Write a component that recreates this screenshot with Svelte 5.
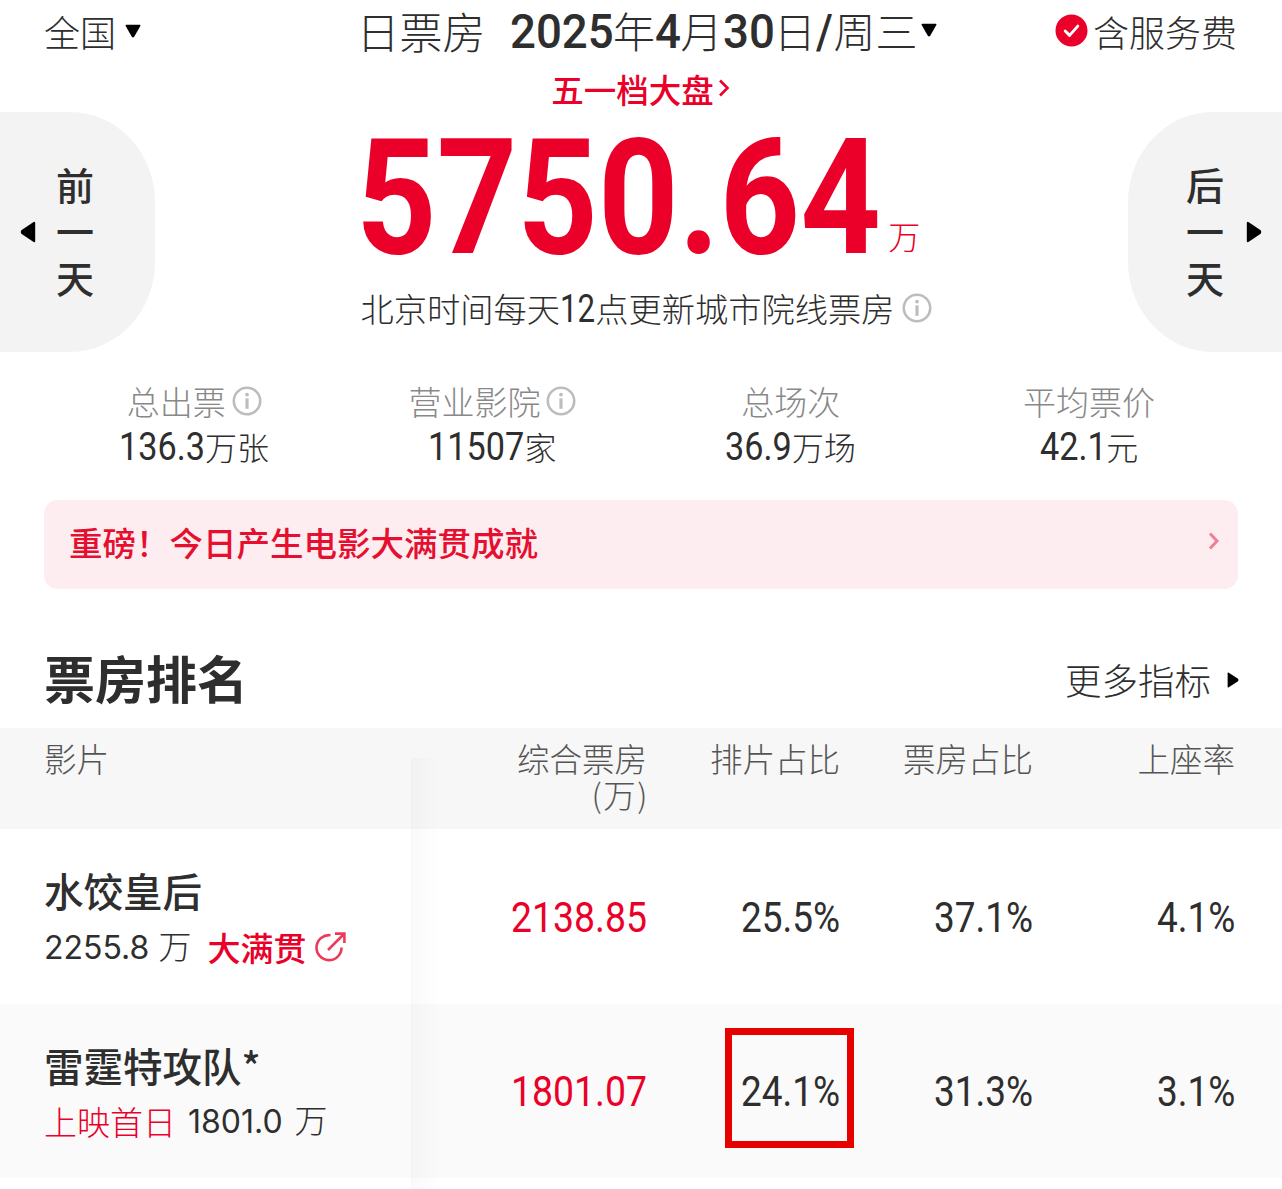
<script lang="ts">
  const stats = [
    { label: "总出票", num: "136.3", unit: "万张", info: true },
    { label: "营业影院", num: "11507", unit: "家", info: true },
    { label: "总场次", num: "36.9", unit: "万场", info: false },
    { label: "平均票价", num: "42.1", unit: "元", info: false }
  ];
  const heads = ["综合票房", "排片占比", "票房占比", "上座率"];

  // Roboto advance widths in em, there is no condensed face installed
  function emWidth(text: string): number {
    let w = 0;
    for (const c of text) {
      if (c === ".") w += 0.263;
      else if (c === "%") w += 0.732;
      else if (c === "/") w += 0.412;
      else w += 0.5615;
    }
    return w;
  }
</script>

{#snippet n(text: string, size: number, sx: number)}
  <span class="cond" style="font-size: {size}px; width: {emWidth(text) * size * sx}px; transform: scaleX({sx})">{text}</span>
{/snippet}

{#snippet info(size: number)}
  <svg class="info" width={size} height={size} viewBox="0 0 30 30" fill="none">
    <circle cx="15" cy="15" r="13.2" stroke="#bdbdbd" stroke-width="2.6" />
    <circle cx="15" cy="8.6" r="1.9" fill="#bdbdbd" />
    <rect x="13.4" y="12.4" width="3.2" height="10.4" fill="#bdbdbd" />
  </svg>
{/snippet}

{#snippet tri(dir: string, w: number, h: number)}
  <svg class="tri" width={w} height={h} viewBox="0 0 12 12" preserveAspectRatio="none" style="transform: rotate({dir}deg)">
    <path d="M1.2 .6 L10.8 .6 Q12 .6 11.5 1.8 L6.9 11 Q6 12 5.1 11 L.5 1.8 Q0 .6 1.2 .6 Z" fill="#000" />
  </svg>
{/snippet}

<div class="page">
  <header class="top">
    <div class="region"><span>全国</span>{@render tri("0", 16, 14)}</div>
    <div class="date">
      <span class="date-title">日票房</span>
      <span class="date-val">{@render n("2025", 48, 0.95)}年{@render n("4", 48, 0.95)}月{@render n("30", 48, 0.95)}日{@render n("/", 48, 0.9)}周三</span>
      {@render tri("0", 16, 14)}
    </div>
    <div class="fee">
      <svg width="33" height="33" viewBox="0 0 34 34">
        <circle cx="17" cy="17" r="16.5" fill="#ea0029" />
        <path d="M10.5 17.5 L15 22 L23.5 12.5" fill="none" stroke="#fff" stroke-width="3" stroke-linecap="round" stroke-linejoin="round" />
      </svg>
      <span>含服务费</span>
    </div>
  </header>

  <section class="hero">
    <button class="day prev">
      <span class="arrow">{@render tri("90", 22, 16)}</span>
      <span class="day-text">前<br />一<br />天</span>
    </button>
    <div class="hero-mid">
      <div class="holiday">
        五一档大盘
        <svg width="12" height="22" viewBox="0 0 12 22" fill="none">
          <path d="M2 3.5 L9.5 11 L2 18.5" stroke="#ea0029" stroke-width="2.6" />
        </svg>
      </div>
      <div class="total"><span class="total-num">{@render n("5750.64", 162, 0.868)}</span><span class="total-unit">万</span></div>
      <div class="note"><span>北京时间每天{@render n("12", 39, 0.8)}点更新城市院线票房</span>{@render info(30)}</div>
    </div>
    <button class="day next">
      <span class="day-text">后<br />一<br />天</span>
      <span class="arrow">{@render tri("-90", 22, 16)}</span>
    </button>
  </section>

  <section class="stats">
    {#each stats as s}
      <div class="stat">
        <div class="stat-label">{s.label}{#if s.info}{@render info(30)}{/if}</div>
        <div class="stat-val">{@render n(s.num, 38, 0.9)}{s.unit}</div>
      </div>
    {/each}
  </section>

  <a class="banner" href="#top">
    <span>重磅！今日产生电影大满贯成就</span>
    <svg width="12" height="20" viewBox="0 0 12 20" fill="none">
      <path d="M2 2.5 L9 10 L2 17.5" stroke="#f07f95" stroke-width="3" />
    </svg>
  </a>

  <div class="rank-head">
    <h2>票房排名</h2>
    <div class="more"><span>更多指标</span>{@render tri("-90", 16, 12)}</div>
  </div>

  <div class="table">
    <div class="row thead">
      <div class="film-cell">影片</div>
      {#each heads as h, i}
        <div class="num-head">{h}{#if i === 0}<br /><span class="paren">(万)</span>{/if}</div>
      {/each}
    </div>

    <div class="row body">
      <div class="film-cell">
        <div class="film-name">水饺皇后</div>
        <div class="film-sub">
          <span class="sum">2255.8 <em>万</em></span>
          <span class="tag">大满贯</span>
          <svg width="32" height="32" viewBox="0 0 32 32" fill="none" stroke="#ea3c5a" stroke-width="2.6">
            <path d="M26.5 16.5 A12.5 12.5 0 1 1 15.5 4.2" />
            <path d="M13 19 L29 3 M20 2.6 H29.4 V12" />
          </svg>
        </div>
      </div>
      <div class="num red">{@render n("2138.85", 42, 0.89)}</div>
      <div class="num">{@render n("25.5%", 42, 0.88)}</div>
      <div class="num">{@render n("37.1%", 42, 0.88)}</div>
      <div class="num">{@render n("4.1%", 42, 0.88)}</div>
    </div>

    <div class="row body alt">
      <div class="film-cell">
        <div class="film-name">雷霆特攻队*</div>
        <div class="film-sub">
          <span class="first">上映首日</span>
          <span class="sum">1801.0 <em>万</em></span>
        </div>
      </div>
      <div class="num red">{@render n("1801.07", 42, 0.89)}</div>
      <div class="num marked">{@render n("24.1%", 42, 0.88)}<i class="mark"></i></div>
      <div class="num">{@render n("31.3%", 42, 0.88)}</div>
      <div class="num">{@render n("3.1%", 42, 0.88)}</div>
    </div>

    <div class="fade"></div>
  </div>
</div>

<style>
  :global(body) {
    margin: 0;
    background: #fff;
  }

  .page {
    width: 1282px;
    height: 1189px;
    overflow: hidden;
    color: #2e2e2e;
    font-family: "Noto Sans CJK SC", "Noto Sans", sans-serif;
    font-weight: 300;
  }

  .cond {
    display: inline-block;
    font-family: "Roboto", sans-serif;
    font-weight: 400;
    white-space: nowrap;
    transform-origin: left center;
    line-height: 1;
  }

  .top {
    height: 62px;
    padding: 0 45px 0 44px;
    display: grid;
    grid-template-columns: 1fr auto 1fr;
    align-items: center;
    font-size: 36px;
  }

  .region { display: flex; align-items: center; gap: 9px; margin-top: -1px; }

  .date {
    display: flex;
    align-items: center;
    gap: 3px;
    font-size: 42px;
    margin: -3px 0 0 12px;
  }
  .date-title { margin-right: 22px; font-size: 43px; }
  .date-val .cond { font-weight: 500; }

  .fee { display: flex; align-items: center; justify-content: flex-end; gap: 5px; margin-top: -1px; }

  .hero {
    display: grid;
    grid-template-columns: 155px 1fr 154px;
    height: 290px;
  }

  .day {
    margin-top: 50px;
    border: none;
    background: #f3f3f3;
    padding: 0;
    display: flex;
    align-items: center;
    color: #2e2e2e;
    font-family: inherit;
  }

  .prev {
    border-radius: 0 85px 85px 0 / 0 90px 90px 0;
    padding-left: 17px;
    gap: 17px;
  }

  .next {
    border-radius: 85px 0 0 85px / 90px 0 0 90px;
    padding-left: 58px;
    gap: 19px;
  }

  .arrow { display: flex; }

  .day-text {
    font-size: 38px;
    font-weight: 500;
    line-height: 46.5px;
    text-align: center;
    margin-top: -3px;
  }

  .hero-mid {
    display: flex;
    flex-direction: column;
    align-items: center;
  }

  .holiday {
    height: 52px;
    padding-bottom: 2px;
    display: flex;
    align-items: center;
    gap: 4px;
    margin-right: 2px;
    font-size: 32.5px;
    font-weight: 500;
    color: #ea0029;
  }

  .total {
    height: 168px;
    display: flex;
    align-items: flex-end;
    margin-right: 7px;
  }

  .total-num {
    height: 168px;
    line-height: 165px;
    color: #ea0029;
  }

  .total-num .cond { font-weight: 700; line-height: 165px; vertical-align: top; }

  .total-unit {
    font-size: 32px;
    line-height: 40px;
    color: #ea0029;
    margin: 0 0 29px 22px;
  }

  .note {
    margin: 2px 0 0 10px;
    display: flex;
    align-items: center;
    gap: 8px;
    font-size: 33.25px;
    line-height: 44px;
  }

  .stats {
    margin-top: 27px;
    padding: 0 44px 0 45px;
    display: grid;
    grid-template-columns: repeat(4, 1fr);
    text-align: center;
  }

  .stat-label {
    height: 44px;
    display: flex;
    align-items: center;
    justify-content: center;
    gap: 6px;
    font-size: 33px;
    color: #888;
  }

  .stat-val { font-size: 32px; line-height: 46px; }

  .banner {
    margin: 31px 44px 0;
    height: 89px;
    box-sizing: border-box;
    padding: 0 18px 7px 25px;
    border-radius: 14px;
    background: #fdedf0;
    display: flex;
    align-items: center;
    justify-content: space-between;
    text-decoration: none;
    font-size: 33.5px;
    font-weight: 500;
    color: #e60f2f;
  }

  .rank-head {
    height: 139px;
    padding: 0 41px 0 44px;
    display: flex;
    align-items: center;
    justify-content: space-between;
  }

  h2 {
    margin: 38px 0 0;
    font-size: 51px;
    font-weight: 700;
    line-height: 1;
  }

  .more {
    margin-top: 42px;
    display: flex;
    align-items: center;
    gap: 14px;
    font-size: 36.5px;
  }

  .table { position: relative; height: 461px; }

  .row {
    display: grid;
    grid-template-columns: 411px 236px 193px 193px 202px;
  }

  .thead {
    height: 101px;
    background: #f7f7f7;
    font-size: 32.5px;
    line-height: 36px;
    color: #555;
  }

  .thead .film-cell { padding: 12px 0 0 44px; }
  .num-head { padding-top: 12px; text-align: right; }
  .paren { letter-spacing: 1.5px; margin-right: -2px; }

  .body { height: 175px; }
  .alt { background: #fafafa; height: 174px; }

  .body .film-cell {
    padding: 33px 0 0 44px;
  }

  .film-name {
    font-size: 39.5px;
    line-height: 56px;
    font-weight: 500;
  }

  .film-sub {
    display: flex;
    align-items: center;
    gap: 9px;
    margin-top: 4px;
    font-size: 33px;
    line-height: 46px;
  }

  .sum {
    font-family: "Inter", sans-serif;
    font-size: 32px;
    font-weight: 400;
  }
  .sum em {
    font-family: "Noto Sans CJK SC", sans-serif;
    font-style: normal;
    font-size: 33px;
    font-weight: 300;
  }
  .tag { color: #ea0029; font-weight: 500; margin-left: 7px; }
  .first { color: #ea0029; }
  .alt .film-sub { margin-top: 3px; }
  .alt .sum { margin-left: 3px; }
  .alt .sum em { margin-left: 3px; }

  .num {
    align-self: center;
    height: 50px;
    line-height: 50px;
    margin-top: 2px;
    text-align: right;
  }

  .num .cond { line-height: 50px; vertical-align: top; }

  .red { color: #ea0029; }
  .marked { position: relative; }

  .mark {
    position: absolute;
    right: -14px;
    top: -39px;
    width: 115px;
    height: 106px;
    border: 7px solid #e60000;
  }

  .fade {
    position: absolute;
    left: 411px;
    top: 30px;
    bottom: 0;
    width: 30px;
    background: linear-gradient(to right, rgba(0, 0, 0, 0.025), transparent);
    pointer-events: none;
  }

  .tri, .info { flex: none; }
</style>
